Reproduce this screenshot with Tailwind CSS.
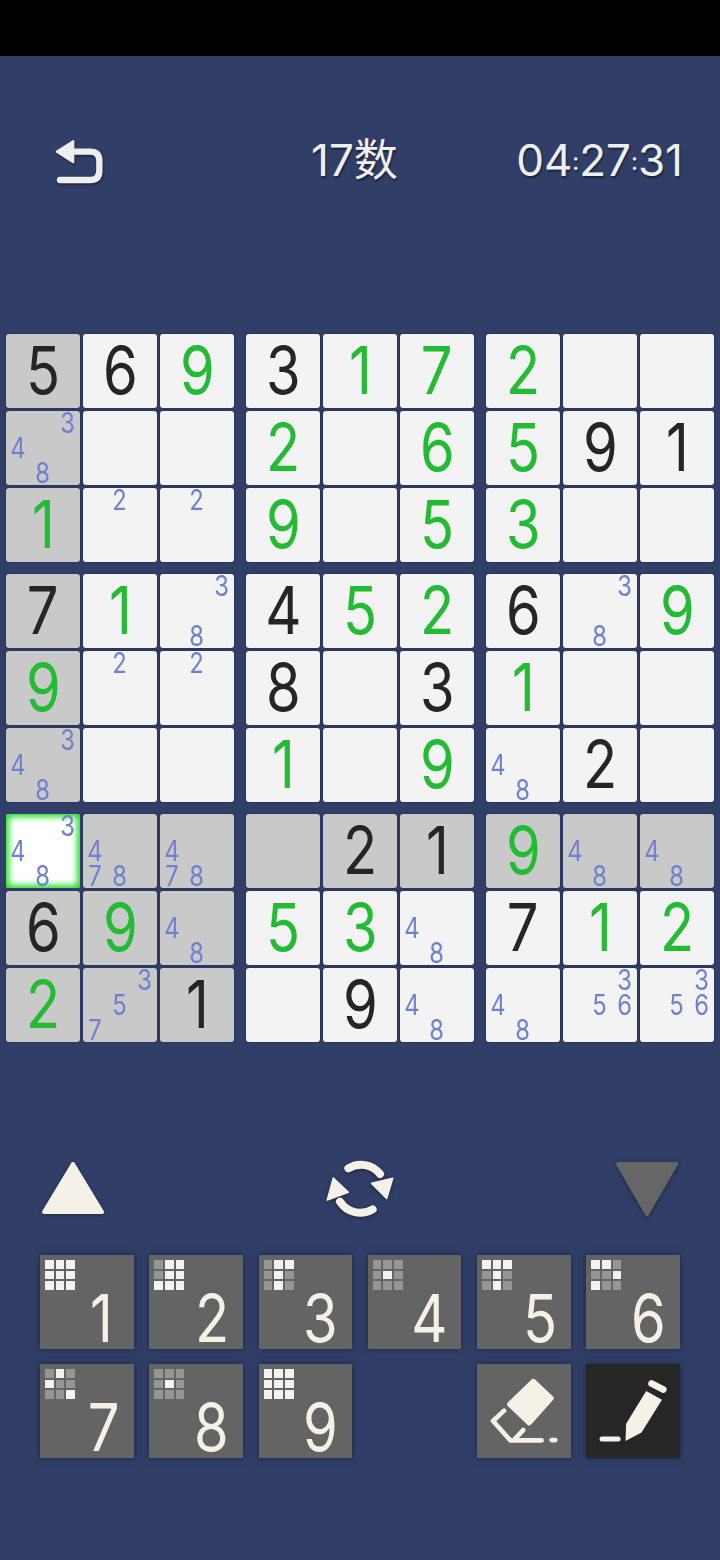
<!doctype html><html><head><script src="https://cdn.jsdelivr.net/npm/@tailwindcss/browser@4"></script></head>
<body class="bg-[#313f68]">
<div class="w-[720px] h-[1560px] overflow-hidden font-['Inter',sans-serif]">
  <div class="h-14 bg-black"></div>

  <header class="flex h-[60px] mt-[74px] pl-[40px] pr-[37px] items-center text-[#eeeeee] text-[44px] leading-none font-['Inter','Noto_Sans_CJK_SC',sans-serif] [text-shadow:1px_2px_2px_#0007]">
    <svg class="w-[80px] h-[60px] drop-shadow-[1px_2px_1px_#0005]" viewBox="0 0 240 180"><path d="M50 65 L100 33 V97 Z" fill="#eeeeee" stroke="#eeeeee" stroke-width="6" stroke-linejoin="round"/><path d="M95 65 H150 Q178 65 178 92 V122 Q178 150 150 150 H60" fill="none" stroke="#eeeeee" stroke-width="19" stroke-linecap="round"/></svg>
    <div class="ml-[191px]">17数</div>
    <div class="ml-auto">04<span class="text-[24px] align-[6px]">:</span>27<span class="text-[24px] align-[6px]">:</span>31</div>
  </header>

  <main class="mt-[144px] px-[6px] grid grid-cols-3 gap-[12px] [&_span]:scale-x-[.85] [&>div>div]:shadow-[0_0_2px_#1c2545]">
    <!-- block 1 -->
    <div class="grid grid-cols-3 gap-[3px]">
      <div class="grid place-items-center h-[74px] pb-[3px] rounded-[3px] bg-[#c9c9c9] text-[66px] leading-none text-[#252525]"><span>5</span></div>
      <div class="grid place-items-center h-[74px] pb-[3px] rounded-[3px] bg-[#f3f3f3] text-[66px] leading-none text-[#252525]"><span>6</span></div>
      <div class="grid place-items-center h-[74px] pb-[3px] rounded-[3px] bg-[#f3f3f3] text-[66px] leading-none text-[#22bb33]"><span>9</span></div>
      <div class="grid grid-cols-3 grid-rows-3 place-items-center h-[74px] rounded-[3px] bg-[#c9c9c9] text-[28px] leading-none text-[#7080cc]"><span class="col-start-3 row-start-1">3</span><span class="col-start-1 row-start-2">4</span><span class="col-start-2 row-start-3">8</span></div>
      <div class="h-[74px] rounded-[3px] bg-[#f3f3f3]"></div>
      <div class="h-[74px] rounded-[3px] bg-[#f3f3f3]"></div>
      <div class="grid place-items-center h-[74px] pb-[3px] rounded-[3px] bg-[#c9c9c9] text-[66px] leading-none text-[#22bb33]"><span>1</span></div>
      <div class="grid grid-cols-3 grid-rows-3 place-items-center h-[74px] rounded-[3px] bg-[#f3f3f3] text-[28px] leading-none text-[#7080cc]"><span class="col-start-2 row-start-1">2</span></div>
      <div class="grid grid-cols-3 grid-rows-3 place-items-center h-[74px] rounded-[3px] bg-[#f3f3f3] text-[28px] leading-none text-[#7080cc]"><span class="col-start-2 row-start-1">2</span></div>
    </div>
    <!-- block 2 -->
    <div class="grid grid-cols-3 gap-[3px]">
      <div class="grid place-items-center h-[74px] pb-[3px] rounded-[3px] bg-[#f3f3f3] text-[66px] leading-none text-[#252525]"><span>3</span></div>
      <div class="grid place-items-center h-[74px] pb-[3px] rounded-[3px] bg-[#f3f3f3] text-[66px] leading-none text-[#22bb33]"><span>1</span></div>
      <div class="grid place-items-center h-[74px] pb-[3px] rounded-[3px] bg-[#f3f3f3] text-[66px] leading-none text-[#22bb33]"><span>7</span></div>
      <div class="grid place-items-center h-[74px] pb-[3px] rounded-[3px] bg-[#f3f3f3] text-[66px] leading-none text-[#22bb33]"><span>2</span></div>
      <div class="h-[74px] rounded-[3px] bg-[#f3f3f3]"></div>
      <div class="grid place-items-center h-[74px] pb-[3px] rounded-[3px] bg-[#f3f3f3] text-[66px] leading-none text-[#22bb33]"><span>6</span></div>
      <div class="grid place-items-center h-[74px] pb-[3px] rounded-[3px] bg-[#f3f3f3] text-[66px] leading-none text-[#22bb33]"><span>9</span></div>
      <div class="h-[74px] rounded-[3px] bg-[#f3f3f3]"></div>
      <div class="grid place-items-center h-[74px] pb-[3px] rounded-[3px] bg-[#f3f3f3] text-[66px] leading-none text-[#22bb33]"><span>5</span></div>
    </div>
    <!-- block 3 -->
    <div class="grid grid-cols-3 gap-[3px]">
      <div class="grid place-items-center h-[74px] pb-[3px] rounded-[3px] bg-[#f3f3f3] text-[66px] leading-none text-[#22bb33]"><span>2</span></div>
      <div class="h-[74px] rounded-[3px] bg-[#f3f3f3]"></div>
      <div class="h-[74px] rounded-[3px] bg-[#f3f3f3]"></div>
      <div class="grid place-items-center h-[74px] pb-[3px] rounded-[3px] bg-[#f3f3f3] text-[66px] leading-none text-[#22bb33]"><span>5</span></div>
      <div class="grid place-items-center h-[74px] pb-[3px] rounded-[3px] bg-[#f3f3f3] text-[66px] leading-none text-[#252525]"><span>9</span></div>
      <div class="grid place-items-center h-[74px] pb-[3px] rounded-[3px] bg-[#f3f3f3] text-[66px] leading-none text-[#252525]"><span>1</span></div>
      <div class="grid place-items-center h-[74px] pb-[3px] rounded-[3px] bg-[#f3f3f3] text-[66px] leading-none text-[#22bb33]"><span>3</span></div>
      <div class="h-[74px] rounded-[3px] bg-[#f3f3f3]"></div>
      <div class="h-[74px] rounded-[3px] bg-[#f3f3f3]"></div>
    </div>
    <!-- block 4 -->
    <div class="grid grid-cols-3 gap-[3px]">
      <div class="grid place-items-center h-[74px] pb-[3px] rounded-[3px] bg-[#c9c9c9] text-[66px] leading-none text-[#252525]"><span>7</span></div>
      <div class="grid place-items-center h-[74px] pb-[3px] rounded-[3px] bg-[#f3f3f3] text-[66px] leading-none text-[#22bb33]"><span>1</span></div>
      <div class="grid grid-cols-3 grid-rows-3 place-items-center h-[74px] rounded-[3px] bg-[#f3f3f3] text-[28px] leading-none text-[#7080cc]"><span class="col-start-3 row-start-1">3</span><span class="col-start-2 row-start-3">8</span></div>
      <div class="grid place-items-center h-[74px] pb-[3px] rounded-[3px] bg-[#c9c9c9] text-[66px] leading-none text-[#22bb33]"><span>9</span></div>
      <div class="grid grid-cols-3 grid-rows-3 place-items-center h-[74px] rounded-[3px] bg-[#f3f3f3] text-[28px] leading-none text-[#7080cc]"><span class="col-start-2 row-start-1">2</span></div>
      <div class="grid grid-cols-3 grid-rows-3 place-items-center h-[74px] rounded-[3px] bg-[#f3f3f3] text-[28px] leading-none text-[#7080cc]"><span class="col-start-2 row-start-1">2</span></div>
      <div class="grid grid-cols-3 grid-rows-3 place-items-center h-[74px] rounded-[3px] bg-[#c9c9c9] text-[28px] leading-none text-[#7080cc]"><span class="col-start-3 row-start-1">3</span><span class="col-start-1 row-start-2">4</span><span class="col-start-2 row-start-3">8</span></div>
      <div class="h-[74px] rounded-[3px] bg-[#f3f3f3]"></div>
      <div class="h-[74px] rounded-[3px] bg-[#f3f3f3]"></div>
    </div>
    <!-- block 5 -->
    <div class="grid grid-cols-3 gap-[3px]">
      <div class="grid place-items-center h-[74px] pb-[3px] rounded-[3px] bg-[#f3f3f3] text-[66px] leading-none text-[#252525]"><span>4</span></div>
      <div class="grid place-items-center h-[74px] pb-[3px] rounded-[3px] bg-[#f3f3f3] text-[66px] leading-none text-[#22bb33]"><span>5</span></div>
      <div class="grid place-items-center h-[74px] pb-[3px] rounded-[3px] bg-[#f3f3f3] text-[66px] leading-none text-[#22bb33]"><span>2</span></div>
      <div class="grid place-items-center h-[74px] pb-[3px] rounded-[3px] bg-[#f3f3f3] text-[66px] leading-none text-[#252525]"><span>8</span></div>
      <div class="h-[74px] rounded-[3px] bg-[#f3f3f3]"></div>
      <div class="grid place-items-center h-[74px] pb-[3px] rounded-[3px] bg-[#f3f3f3] text-[66px] leading-none text-[#252525]"><span>3</span></div>
      <div class="grid place-items-center h-[74px] pb-[3px] rounded-[3px] bg-[#f3f3f3] text-[66px] leading-none text-[#22bb33]"><span>1</span></div>
      <div class="h-[74px] rounded-[3px] bg-[#f3f3f3]"></div>
      <div class="grid place-items-center h-[74px] pb-[3px] rounded-[3px] bg-[#f3f3f3] text-[66px] leading-none text-[#22bb33]"><span>9</span></div>
    </div>
    <!-- block 6 -->
    <div class="grid grid-cols-3 gap-[3px]">
      <div class="grid place-items-center h-[74px] pb-[3px] rounded-[3px] bg-[#f3f3f3] text-[66px] leading-none text-[#252525]"><span>6</span></div>
      <div class="grid grid-cols-3 grid-rows-3 place-items-center h-[74px] rounded-[3px] bg-[#f3f3f3] text-[28px] leading-none text-[#7080cc]"><span class="col-start-3 row-start-1">3</span><span class="col-start-2 row-start-3">8</span></div>
      <div class="grid place-items-center h-[74px] pb-[3px] rounded-[3px] bg-[#f3f3f3] text-[66px] leading-none text-[#22bb33]"><span>9</span></div>
      <div class="grid place-items-center h-[74px] pb-[3px] rounded-[3px] bg-[#f3f3f3] text-[66px] leading-none text-[#22bb33]"><span>1</span></div>
      <div class="h-[74px] rounded-[3px] bg-[#f3f3f3]"></div>
      <div class="h-[74px] rounded-[3px] bg-[#f3f3f3]"></div>
      <div class="grid grid-cols-3 grid-rows-3 place-items-center h-[74px] rounded-[3px] bg-[#f3f3f3] text-[28px] leading-none text-[#7080cc]"><span class="col-start-1 row-start-2">4</span><span class="col-start-2 row-start-3">8</span></div>
      <div class="grid place-items-center h-[74px] pb-[3px] rounded-[3px] bg-[#f3f3f3] text-[66px] leading-none text-[#252525]"><span>2</span></div>
      <div class="h-[74px] rounded-[3px] bg-[#f3f3f3]"></div>
    </div>
    <!-- block 7 -->
    <div class="grid grid-cols-3 gap-[3px]">
      <div class="grid grid-cols-3 grid-rows-3 place-items-center h-[74px] rounded-[3px] bg-white shadow-[inset_0_0_6px_3px_#22dd22]! text-[28px] leading-none text-[#7080cc]"><span class="col-start-3 row-start-1">3</span><span class="col-start-1 row-start-2">4</span><span class="col-start-2 row-start-3">8</span></div>
      <div class="grid grid-cols-3 grid-rows-3 place-items-center h-[74px] rounded-[3px] bg-[#c9c9c9] text-[28px] leading-none text-[#7080cc]"><span class="col-start-1 row-start-2">4</span><span class="col-start-1 row-start-3">7</span><span class="col-start-2 row-start-3">8</span></div>
      <div class="grid grid-cols-3 grid-rows-3 place-items-center h-[74px] rounded-[3px] bg-[#c9c9c9] text-[28px] leading-none text-[#7080cc]"><span class="col-start-1 row-start-2">4</span><span class="col-start-1 row-start-3">7</span><span class="col-start-2 row-start-3">8</span></div>
      <div class="grid place-items-center h-[74px] pb-[3px] rounded-[3px] bg-[#c9c9c9] text-[66px] leading-none text-[#252525]"><span>6</span></div>
      <div class="grid place-items-center h-[74px] pb-[3px] rounded-[3px] bg-[#c9c9c9] text-[66px] leading-none text-[#22bb33]"><span>9</span></div>
      <div class="grid grid-cols-3 grid-rows-3 place-items-center h-[74px] rounded-[3px] bg-[#c9c9c9] text-[28px] leading-none text-[#7080cc]"><span class="col-start-1 row-start-2">4</span><span class="col-start-2 row-start-3">8</span></div>
      <div class="grid place-items-center h-[74px] pb-[3px] rounded-[3px] bg-[#c9c9c9] text-[66px] leading-none text-[#22bb33]"><span>2</span></div>
      <div class="grid grid-cols-3 grid-rows-3 place-items-center h-[74px] rounded-[3px] bg-[#c9c9c9] text-[28px] leading-none text-[#7080cc]"><span class="col-start-3 row-start-1">3</span><span class="col-start-2 row-start-2">5</span><span class="col-start-1 row-start-3">7</span></div>
      <div class="grid place-items-center h-[74px] pb-[3px] rounded-[3px] bg-[#c9c9c9] text-[66px] leading-none text-[#252525]"><span>1</span></div>
    </div>
    <!-- block 8 -->
    <div class="grid grid-cols-3 gap-[3px]">
      <div class="h-[74px] rounded-[3px] bg-[#c9c9c9]"></div>
      <div class="grid place-items-center h-[74px] pb-[3px] rounded-[3px] bg-[#c9c9c9] text-[66px] leading-none text-[#252525]"><span>2</span></div>
      <div class="grid place-items-center h-[74px] pb-[3px] rounded-[3px] bg-[#c9c9c9] text-[66px] leading-none text-[#252525]"><span>1</span></div>
      <div class="grid place-items-center h-[74px] pb-[3px] rounded-[3px] bg-[#f3f3f3] text-[66px] leading-none text-[#22bb33]"><span>5</span></div>
      <div class="grid place-items-center h-[74px] pb-[3px] rounded-[3px] bg-[#f3f3f3] text-[66px] leading-none text-[#22bb33]"><span>3</span></div>
      <div class="grid grid-cols-3 grid-rows-3 place-items-center h-[74px] rounded-[3px] bg-[#f3f3f3] text-[28px] leading-none text-[#7080cc]"><span class="col-start-1 row-start-2">4</span><span class="col-start-2 row-start-3">8</span></div>
      <div class="h-[74px] rounded-[3px] bg-[#f3f3f3]"></div>
      <div class="grid place-items-center h-[74px] pb-[3px] rounded-[3px] bg-[#f3f3f3] text-[66px] leading-none text-[#252525]"><span>9</span></div>
      <div class="grid grid-cols-3 grid-rows-3 place-items-center h-[74px] rounded-[3px] bg-[#f3f3f3] text-[28px] leading-none text-[#7080cc]"><span class="col-start-1 row-start-2">4</span><span class="col-start-2 row-start-3">8</span></div>
    </div>
    <!-- block 9 -->
    <div class="grid grid-cols-3 gap-[3px]">
      <div class="grid place-items-center h-[74px] pb-[3px] rounded-[3px] bg-[#c9c9c9] text-[66px] leading-none text-[#22bb33]"><span>9</span></div>
      <div class="grid grid-cols-3 grid-rows-3 place-items-center h-[74px] rounded-[3px] bg-[#c9c9c9] text-[28px] leading-none text-[#7080cc]"><span class="col-start-1 row-start-2">4</span><span class="col-start-2 row-start-3">8</span></div>
      <div class="grid grid-cols-3 grid-rows-3 place-items-center h-[74px] rounded-[3px] bg-[#c9c9c9] text-[28px] leading-none text-[#7080cc]"><span class="col-start-1 row-start-2">4</span><span class="col-start-2 row-start-3">8</span></div>
      <div class="grid place-items-center h-[74px] pb-[3px] rounded-[3px] bg-[#f3f3f3] text-[66px] leading-none text-[#252525]"><span>7</span></div>
      <div class="grid place-items-center h-[74px] pb-[3px] rounded-[3px] bg-[#f3f3f3] text-[66px] leading-none text-[#22bb33]"><span>1</span></div>
      <div class="grid place-items-center h-[74px] pb-[3px] rounded-[3px] bg-[#f3f3f3] text-[66px] leading-none text-[#22bb33]"><span>2</span></div>
      <div class="grid grid-cols-3 grid-rows-3 place-items-center h-[74px] rounded-[3px] bg-[#f3f3f3] text-[28px] leading-none text-[#7080cc]"><span class="col-start-1 row-start-2">4</span><span class="col-start-2 row-start-3">8</span></div>
      <div class="grid grid-cols-3 grid-rows-3 place-items-center h-[74px] rounded-[3px] bg-[#f3f3f3] text-[28px] leading-none text-[#7080cc]"><span class="col-start-3 row-start-1">3</span><span class="col-start-2 row-start-2">5</span><span class="col-start-3 row-start-2">6</span></div>
      <div class="grid grid-cols-3 grid-rows-3 place-items-center h-[74px] rounded-[3px] bg-[#f3f3f3] text-[28px] leading-none text-[#7080cc]"><span class="col-start-3 row-start-1">3</span><span class="col-start-2 row-start-2">5</span><span class="col-start-3 row-start-2">6</span></div>
    </div>
  </main>

  <section class="mt-[117px] px-[40px] flex justify-between items-center h-[60px]">
    <svg class="w-[66px] h-[60px] drop-shadow-[0_1px_2px_#0006]" viewBox="0 0 66 60"><path d="M33 5 L62 53 H4 Z" fill="#f5f1e8" stroke="#f5f1e8" stroke-width="4" stroke-linejoin="round"/></svg>
    <svg class="w-[70px] h-[65px] mb-[3px] drop-shadow-[0_1px_2px_#0006]" viewBox="915 15 210 195"><path d="M985 55 A72 72 0 0 1 1080 72" fill="none" stroke="#f5f1e8" stroke-width="24" stroke-linecap="round"/><path d="M1118 85 L1100 145 L1055 100 Z" fill="#f5f1e8" stroke="#f5f1e8" stroke-width="5" stroke-linejoin="round"/><path d="M1058 178 A72 72 0 0 1 960 155" fill="none" stroke="#f5f1e8" stroke-width="24" stroke-linecap="round"/><path d="M922 150 L940 84 L985 127 Z" fill="#f5f1e8" stroke="#f5f1e8" stroke-width="5" stroke-linejoin="round"/></svg>
    <svg class="w-[66px] h-[60px] drop-shadow-[0_1px_2px_#0006]" viewBox="0 0 66 60"><path d="M4 5 H62 L33 55 Z" fill="#666666" stroke="#666666" stroke-width="4" stroke-linejoin="round"/></svg>
  </section>

  <section class="mt-[36px] px-[40px] grid grid-cols-6 gap-x-[15.6px] gap-y-[15px] text-[#f5f1e6] [&_span]:scale-x-[.85]">
    <!-- 1 -->
    <button class="relative h-[94px] bg-[#646464] shadow-[0_0_6px_#1a2340] grid justify-items-end items-end pr-[19px] pb-[1px] text-[66px] leading-[60px]"><div class="absolute left-[5px] top-[5px] w-[30px] h-[30px] grid grid-cols-3 gap-[2px]"><i class="bg-[#f2f2f2]"></i><i class="bg-[#f2f2f2]"></i><i class="bg-[#f2f2f2]"></i><i class="bg-[#f2f2f2]"></i><i class="bg-[#f2f2f2]"></i><i class="bg-[#f2f2f2]"></i><i class="bg-[#f2f2f2]"></i><i class="bg-[#f2f2f2]"></i><i class="bg-[#f2f2f2]"></i></div><span>1</span></button>
    <!-- 2 -->
    <button class="relative h-[94px] bg-[#646464] shadow-[0_0_6px_#1a2340] grid justify-items-end items-end pr-[11px] pb-[1px] text-[66px] leading-[60px]"><div class="absolute left-[5px] top-[5px] w-[30px] h-[30px] grid grid-cols-3 gap-[2px]"><i class="bg-[#969696]"></i><i class="bg-[#f2f2f2]"></i><i class="bg-[#f2f2f2]"></i><i class="bg-[#969696]"></i><i class="bg-[#f2f2f2]"></i><i class="bg-[#f2f2f2]"></i><i class="bg-[#f2f2f2]"></i><i class="bg-[#f2f2f2]"></i><i class="bg-[#f2f2f2]"></i></div><span>2</span></button>
    <!-- 3 -->
    <button class="relative h-[94px] bg-[#646464] shadow-[0_0_6px_#1a2340] grid justify-items-end items-end pr-[11px] pb-[1px] text-[66px] leading-[60px]"><div class="absolute left-[5px] top-[5px] w-[30px] h-[30px] grid grid-cols-3 gap-[2px]"><i class="bg-[#969696]"></i><i class="bg-[#f2f2f2]"></i><i class="bg-[#f2f2f2]"></i><i class="bg-[#969696]"></i><i class="bg-[#f2f2f2]"></i><i class="bg-[#969696]"></i><i class="bg-[#969696]"></i><i class="bg-[#f2f2f2]"></i><i class="bg-[#969696]"></i></div><span>3</span></button>
    <!-- 4 -->
    <button class="relative h-[94px] bg-[#646464] shadow-[0_0_6px_#1a2340] grid justify-items-end items-end pr-[11px] pb-[1px] text-[66px] leading-[60px]"><div class="absolute left-[5px] top-[5px] w-[30px] h-[30px] grid grid-cols-3 gap-[2px]"><i class="bg-[#969696]"></i><i class="bg-[#969696]"></i><i class="bg-[#969696]"></i><i class="bg-[#969696]"></i><i class="bg-[#f2f2f2]"></i><i class="bg-[#969696]"></i><i class="bg-[#969696]"></i><i class="bg-[#969696]"></i><i class="bg-[#969696]"></i></div><span>4</span></button>
    <!-- 5 -->
    <button class="relative h-[94px] bg-[#646464] shadow-[0_0_6px_#1a2340] grid justify-items-end items-end pr-[11px] pb-[1px] text-[66px] leading-[60px]"><div class="absolute left-[5px] top-[5px] w-[30px] h-[30px] grid grid-cols-3 gap-[2px]"><i class="bg-[#f2f2f2]"></i><i class="bg-[#f2f2f2]"></i><i class="bg-[#f2f2f2]"></i><i class="bg-[#969696]"></i><i class="bg-[#f2f2f2]"></i><i class="bg-[#969696]"></i><i class="bg-[#969696]"></i><i class="bg-[#f2f2f2]"></i><i class="bg-[#969696]"></i></div><span>5</span></button>
    <!-- 6 -->
    <button class="relative h-[94px] bg-[#646464] shadow-[0_0_6px_#1a2340] grid justify-items-end items-end pr-[11px] pb-[1px] text-[66px] leading-[60px]"><div class="absolute left-[5px] top-[5px] w-[30px] h-[30px] grid grid-cols-3 gap-[2px]"><i class="bg-[#f2f2f2]"></i><i class="bg-[#f2f2f2]"></i><i class="bg-[#969696]"></i><i class="bg-[#969696]"></i><i class="bg-[#969696]"></i><i class="bg-[#f2f2f2]"></i><i class="bg-[#f2f2f2]"></i><i class="bg-[#969696]"></i><i class="bg-[#969696]"></i></div><span>6</span></button>
    <!-- 7 -->
    <button class="relative h-[94px] bg-[#646464] shadow-[0_0_6px_#1a2340] grid justify-items-end items-end pr-[11px] pb-[1px] text-[66px] leading-[60px]"><div class="absolute left-[5px] top-[5px] w-[30px] h-[30px] grid grid-cols-3 gap-[2px]"><i class="bg-[#969696]"></i><i class="bg-[#f2f2f2]"></i><i class="bg-[#969696]"></i><i class="bg-[#f2f2f2]"></i><i class="bg-[#969696]"></i><i class="bg-[#969696]"></i><i class="bg-[#969696]"></i><i class="bg-[#969696]"></i><i class="bg-[#f2f2f2]"></i></div><span>7</span></button>
    <!-- 8 -->
    <button class="relative h-[94px] bg-[#646464] shadow-[0_0_6px_#1a2340] grid justify-items-end items-end pr-[11px] pb-[1px] text-[66px] leading-[60px]"><div class="absolute left-[5px] top-[5px] w-[30px] h-[30px] grid grid-cols-3 gap-[2px]"><i class="bg-[#969696]"></i><i class="bg-[#969696]"></i><i class="bg-[#969696]"></i><i class="bg-[#969696]"></i><i class="bg-[#f2f2f2]"></i><i class="bg-[#969696]"></i><i class="bg-[#969696]"></i><i class="bg-[#969696]"></i><i class="bg-[#969696]"></i></div><span>8</span></button>
    <!-- 9 -->
    <button class="relative h-[94px] bg-[#646464] shadow-[0_0_6px_#1a2340] grid justify-items-end items-end pr-[11px] pb-[1px] text-[66px] leading-[60px]"><div class="absolute left-[5px] top-[5px] w-[30px] h-[30px] grid grid-cols-3 gap-[2px]"><i class="bg-[#f2f2f2]"></i><i class="bg-[#f2f2f2]"></i><i class="bg-[#f2f2f2]"></i><i class="bg-[#f2f2f2]"></i><i class="bg-[#f2f2f2]"></i><i class="bg-[#f2f2f2]"></i><i class="bg-[#f2f2f2]"></i><i class="bg-[#f2f2f2]"></i><i class="bg-[#f2f2f2]"></i></div><span>9</span></button>
    <div></div>
    <!-- eraser -->
    <button class="h-[94px] bg-[#646464] shadow-[0_0_6px_#1a2340]"><svg class="w-full h-full" viewBox="22 28 280 280"><path d="M190 80 L243 130 L178 203 L120 148 Z" fill="#f5f1e6" stroke="#f5f1e6" stroke-width="16" stroke-linejoin="round"/><path d="M103 167 L70 198 L122 256 H215 M160 225 L135 252" fill="none" stroke="#f5f1e6" stroke-width="14" stroke-linecap="round" stroke-linejoin="round"/><path d="M245 255 H256" stroke="#f5f1e6" stroke-width="14" stroke-linecap="round"/></svg></button>
    <!-- pen -->
    <button class="h-[94px] bg-[#262626] shadow-[0_0_6px_#1a2340]"><svg class="w-full h-full" viewBox="350 28 280 280"><path d="M530 108 L577 134 L516 232 L468 258 L470 206 Z" fill="#f5f1e6"/><path d="M546 86 L581 104" stroke="#f5f1e6" stroke-width="20" stroke-linecap="round"/><path d="M398 252 H446" stroke="#f5f1e6" stroke-width="15" stroke-linecap="round"/></svg></button>
  </section>
</div>
</body></html>
